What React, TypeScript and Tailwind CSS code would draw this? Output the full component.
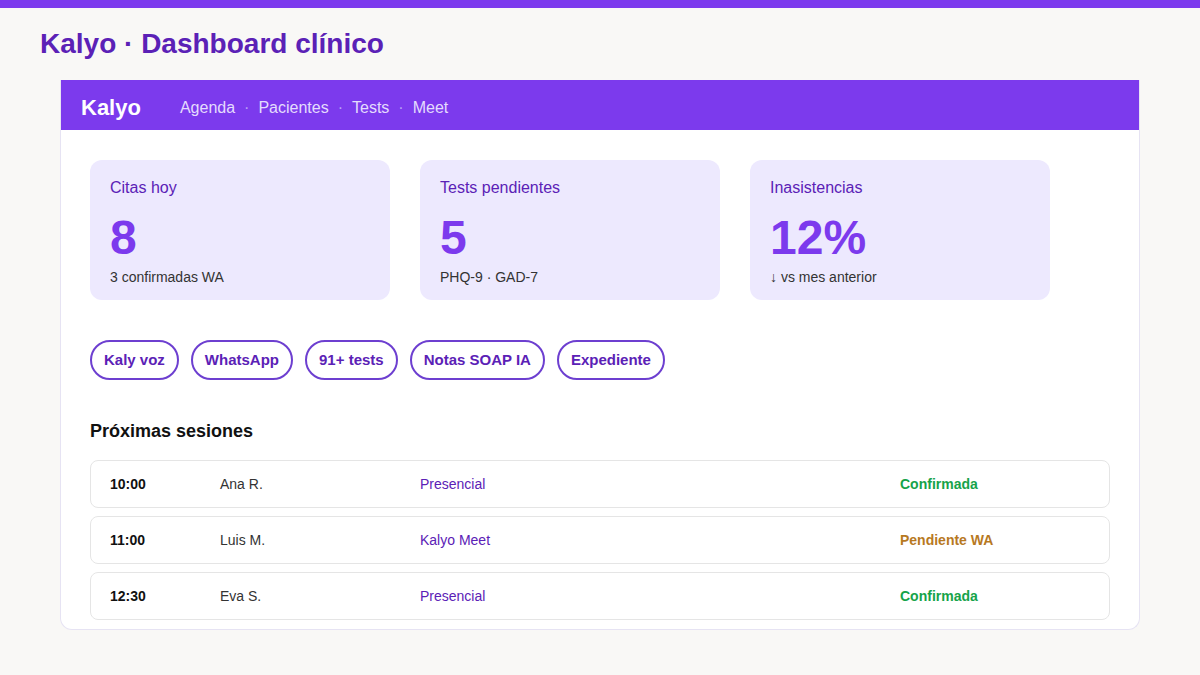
import React from 'react';

const stats = [
  { label: 'Citas hoy', value: '8', sub: '3 confirmadas WA' },
  { label: 'Tests pendientes', value: '5', sub: 'PHQ-9 · GAD-7' },
  { label: 'Inasistencias', value: '12%', sub: '↓ vs mes anterior' },
];

const chips = ['Kaly voz', 'WhatsApp', '91+ tests', 'Notas SOAP IA', 'Expediente'];

const sessions = [
  { time: '10:00', name: 'Ana R.', kind: 'Presencial', status: 'Confirmada', ok: true },
  { time: '11:00', name: 'Luis M.', kind: 'Kalyo Meet', status: 'Pendiente WA', ok: false },
  { time: '12:30', name: 'Eva S.', kind: 'Presencial', status: 'Confirmada', ok: true },
];

const nav = ['Agenda', 'Pacientes', 'Tests', 'Meet'];

export default function App() {
  return (
    <div className="min-h-[675px] bg-[#f9f8f6] font-['Liberation_Sans',Arial,sans-serif]">
      <div className="h-2 bg-[#7c3aed]" />
      <h1 className="px-10 pt-[19px] text-[28px] font-bold leading-[34px] text-[#5b21b6]">
        Kalyo · Dashboard clínico
      </h1>

      <div className="mx-[60px] mt-[19px] h-[550px] overflow-hidden rounded-b-xl border border-t-0 border-[#e6e3f3] bg-white">
        <header className="flex h-[50px] items-center bg-[#7c3aed] px-5 pt-[5px]">
          <span className="text-[22px] font-bold text-white">Kalyo</span>
          <nav className="ml-[39px] flex items-center gap-[9px] text-[16px] text-[#e4dcfd]">
            {nav.map((item, i) => (
              <React.Fragment key={item}>
                {i > 0 && <span className="text-[#b9a2f5]">·</span>}
                <span>{item}</span>
              </React.Fragment>
            ))}
          </nav>
        </header>

        <div className="px-[29px] pt-[30px]">
          <div className="flex gap-[30px]">
            {stats.map((s) => (
              <div key={s.label} className="h-[140px] w-[300px] rounded-xl bg-[#ede9fe] px-5 pt-[18px]">
                <p className="text-[16px] leading-[20px] text-[#5b21b6]">{s.label}</p>
                <p className="mt-[13px] text-[48px] font-bold leading-[54px] text-[#7c3aed]">{s.value}</p>
                <p className="mt-[3px] text-[14px] leading-[18px] text-[#333]">{s.sub}</p>
              </div>
            ))}
          </div>

          <div className="mt-[40px] flex gap-[12px]">
            {chips.map((c) => (
              <span
                key={c}
                className="flex h-[40px] items-center rounded-full border-2 border-[#6d3fd0] px-[12px] text-[15px] font-bold text-[#5b21b6]"
              >
                {c}
              </span>
            ))}
          </div>

          <h2 className="mt-[40px] text-[18px] font-bold leading-[22px] text-[#111]">Próximas sesiones</h2>

          <div className="mt-[18px] flex flex-col gap-[8px]">
            {sessions.map((r) => (
              <div
                key={r.time}
                className="flex h-[48px] items-center rounded-lg border border-[#e5e5e5] px-[19px] text-[14px]"
              >
                <span className="w-[110px] font-bold text-[#111]">{r.time}</span>
                <span className="w-[200px] text-[#333]">{r.name}</span>
                <span className="w-[480px] text-[#5b21b6]">{r.kind}</span>
                <span className={r.ok ? 'font-bold text-[#16a34a]' : 'font-bold text-[#b7791f]'}>{r.status}</span>
              </div>
            ))}
          </div>
        </div>
      </div>
    </div>
  );
}
